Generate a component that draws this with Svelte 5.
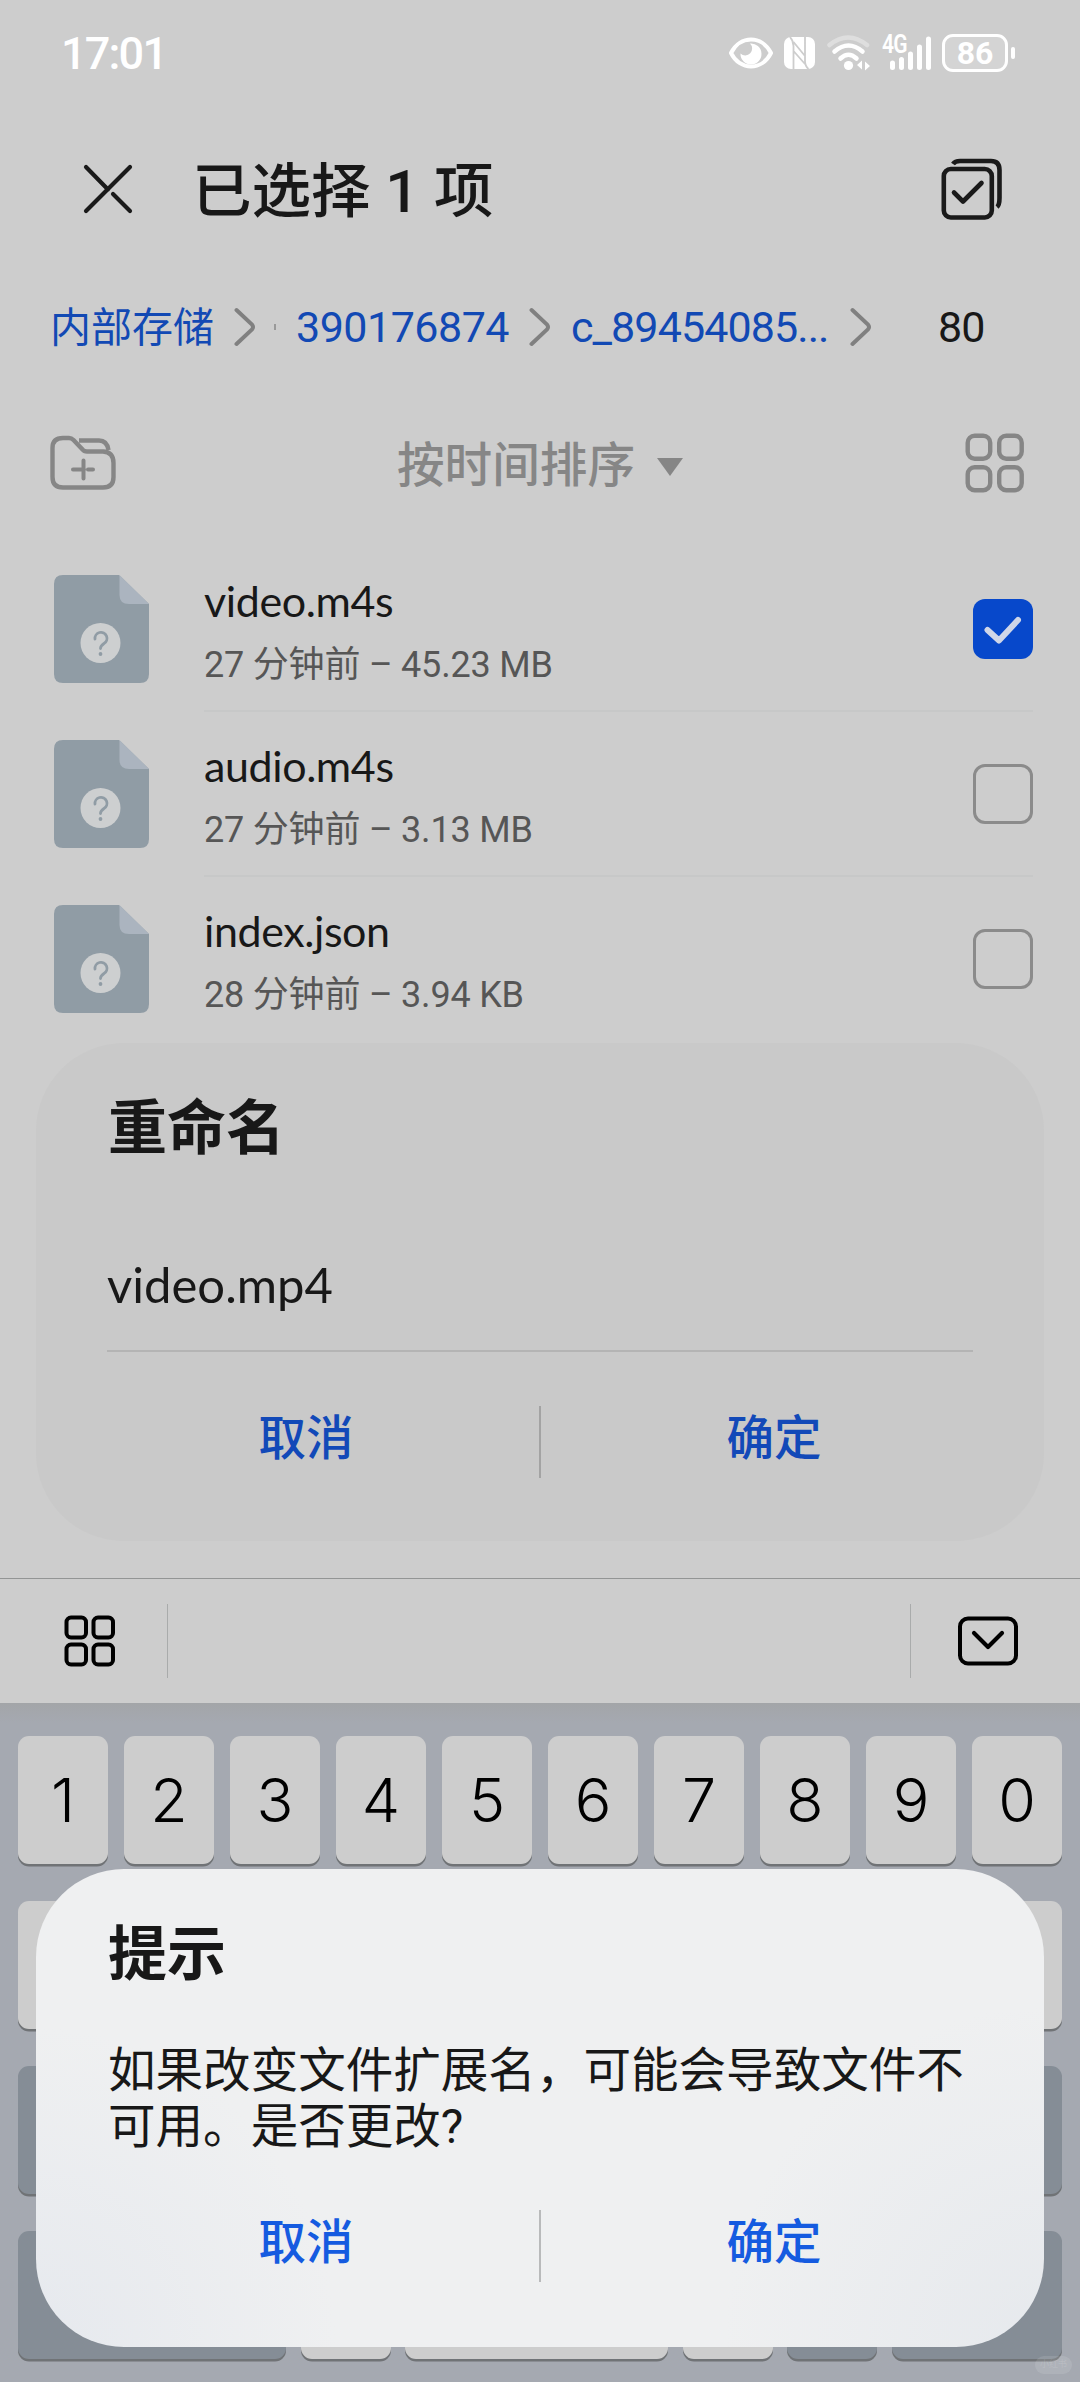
<script lang="ts">
  type FileItem = { name: string; meta: string; checked: boolean }

  let files: FileItem[] = $state([
    { name: 'video.m4s', meta: '27 分钟前 – 45.23 MB', checked: true },
    { name: 'audio.m4s', meta: '27 分钟前 – 3.13 MB', checked: false },
    { name: 'index.json', meta: '28 分钟前 – 3.94 KB', checked: false },
  ])

  const digits = ['1', '2', '3', '4', '5', '6', '7', '8', '9', '0']
  const row3 = ['dark', '', '', '', '', '', '', '', '', 'dark']
  const row4 = ['dark', '', '', '', 'dark', 'dark']
</script>

{#snippet chevron()}
  <svg class="chevron" width="22" height="40" viewBox="0 0 22 40">
    <path d="M2.5 3 L18 17.5 Q20 20 18 22.5 L2.5 37" fill="none" stroke="#808080" stroke-width="4" stroke-linecap="round" />
  </svg>
{/snippet}

{#snippet actions()}
  <div class="actions">
    <button>取消</button>
    <i class="split"></i>
    <button>确定</button>
  </div>
{/snippet}

<div class="phone">
  <main class="manager">
    <div class="status">
      <span class="time">17:01</span>
      <div class="indicators">
        <svg width="46" height="34" viewBox="0 0 46 34">
          <path d="M3 17 C12 -1 34 -1 43 17 C34 35 12 35 3 17 Z" fill="none" stroke="#fff" stroke-width="4" stroke-linejoin="round" />
          <path d="M22 7.5 A10.5 10.5 0 1 1 12.5 17.5 A6 6 0 0 0 22 7.5 Z" fill="#fff" />
        </svg>
        <svg class="nfc" width="31" height="34" viewBox="0 0 31 34">
          <rect x="0" y="1" width="31" height="32" rx="7" fill="#fff" />
          <path d="M6 1 Q9.5 5 9.5 10 V33 M9.5 6 L21 20 M9.5 15 L21 28 M21 1 V25 Q21 30 24.5 33" fill="none" stroke="#cdcdcd" stroke-width="1.8" />
        </svg>
        <svg class="wifi" width="44" height="36" viewBox="0 0 44 36">
          <g fill="none" stroke="#fff" stroke-width="4.5" stroke-linecap="round">
            <path d="M2.5 10 Q21 -5 40 10" stroke="#dedede" />
            <path d="M7.5 16.5 Q21.5 4.5 35.5 16.5" />
            <path d="M13.5 23.5 Q21.5 16 29.5 23.5" />
          </g>
          <circle cx="21.5" cy="30.5" r="4.6" fill="#fff" />
          <path d="M30 30 l5 -4.5 v9 Z M43 31 l-5 -4.5 v9 Z" fill="#fff" />
        </svg>
        <div class="signal">
          <small>4G</small>
          <svg width="50" height="36" viewBox="0 0 50 36">
            <path d="M10.5 28 V32.5 M19.5 24.5 V32.5 M28.5 19 V32.5 M37.5 12 V32.5 M46.5 4 V32.5" stroke="#fff" stroke-width="5" stroke-linecap="round" />
          </svg>
        </div>
        <div class="battery"><span>86</span></div>
        <i class="nub"></i>
      </div>
    </div>

    <header>
      <svg class="close" width="52" height="52" viewBox="0 0 52 52">
        <path d="M4 4 L26 26.5 M31 31 L48 48 M48 4 L4 48" fill="none" stroke="#1a1a1a" stroke-width="4.2" stroke-linecap="round" />
      </svg>
      <h1>已选择 1 项</h1>
      <svg width="62" height="62" viewBox="0 0 62 62">
        <g fill="none" stroke="#1a1a1a" stroke-width="4.6">
          <rect x="2.8" y="11" width="48" height="48.5" rx="7" />
          <path d="M12 6 Q14 3 19 3 H50 Q58.5 3 58.5 12 V40 Q58.5 47 56 49" />
          <path d="M13 34.5 L22 43.5 L40.5 25" stroke-linecap="round" stroke-linejoin="round" />
        </g>
      </svg>
    </header>

    <nav>
      <span class="root">内部存储</span>
      {@render chevron()}
      <i class="dot"></i>
      <span class="id">390176874</span>
      {@render chevron()}
      <span class="folder">c_89454085...</span>
      {@render chevron()}
      <span class="current">80</span>
    </nav>

    <div class="sortbar">
      <svg width="66" height="56" viewBox="0 0 66 56">
        <g fill="none" stroke="#868686" stroke-width="4.4">
          <path d="M2.5 13 Q2.5 3 13 3 H19 Q21.5 3 23.5 5 L32.5 14.5 Q34 16.5 37 16.5 H53 Q63.5 17 63.5 28 V42 Q63.5 52.5 53 52.5 H13 Q2.5 52.5 2.5 42 Z" />
          <path d="M29 5.5 H49 Q57 5.5 58.5 15" />
          <path d="M33.5 25.5 V43.5 M23 34.5 H34 M38 34.5 H43" stroke-width="4" stroke-linecap="round" />
        </g>
      </svg>
      <div class="sort">
        <span>按时间排序</span>
        <svg width="26" height="18" viewBox="0 0 26 18"><path d="M0 0 H26 L13 18 Z" fill="#868686" /></svg>
      </div>
      <svg width="60" height="60" viewBox="0 0 60 60">
        <g fill="none" stroke="#868686" stroke-width="4.4">
          <rect x="2.7" y="2.7" width="22.5" height="23" rx="7" />
          <rect x="34.2" y="2.7" width="22.5" height="23" rx="7" />
          <rect x="2.7" y="34.2" width="22.5" height="23" rx="7" />
          <rect x="34.2" y="34.2" width="22.5" height="23" rx="7" />
        </g>
      </svg>
    </div>

    <ul>
      {#each files as file}
        <li>
          <svg class="doc" width="95" height="108" viewBox="0 0 95 108">
            <path d="M9 0 H65 L95 29 V99 Q95 108 86 108 H9 Q0 108 0 99 V9 Q0 0 9 0 Z" fill="#909ca5" />
            <path d="M65.5 0 L95 29 H75 Q65.5 29 65.5 20 Z" fill="#abb4bf" />
            <circle cx="46.5" cy="68" r="20" fill="#cdcfd0" />
            <path d="M41 64 A6 6 0 1 1 50 68.5 Q46.5 71 46.5 73.5" fill="none" stroke="#909ca5" stroke-width="2.8" stroke-linecap="round" />
            <circle cx="46.5" cy="79" r="1.9" fill="#909ca5" />
          </svg>
          <div class="info">
            <div class="name">{file.name}</div>
            <div class="meta">{file.meta}</div>
          </div>
          <button class="check" class:on={file.checked} aria-label={file.name} onclick={() => (file.checked = !file.checked)}>
            {#if file.checked}
              <svg width="60" height="60" viewBox="0 0 60 60">
                <path d="M14.5 31 L26 41.5 L45 21" fill="none" stroke="#cfd6e8" stroke-width="6" stroke-linecap="round" stroke-linejoin="round" />
              </svg>
            {/if}
          </button>
        </li>
      {/each}
    </ul>
  </main>

  <section class="keyboard">
    <div class="strip">
      <svg width="52" height="52" viewBox="0 0 52 52">
        <g fill="none" stroke="#000" stroke-width="4">
          <rect x="2.5" y="2.5" width="19.5" height="20" rx="4.5" />
          <rect x="29.5" y="2.5" width="19.5" height="20" rx="4.5" />
          <rect x="2.5" y="29.5" width="19.5" height="20" rx="4.5" />
          <rect x="29.5" y="29.5" width="19.5" height="20" rx="4.5" />
        </g>
      </svg>
      <i></i>
      <i class="right"></i>
      <svg width="60" height="50" viewBox="0 0 60 50">
        <rect x="2" y="2.5" width="56" height="45" rx="8" fill="none" stroke="#000" stroke-width="4" />
        <path d="M16 17 L30 31 L44 17" fill="none" stroke="#000" stroke-width="4.2" stroke-linecap="round" stroke-linejoin="round" />
      </svg>
    </div>
    <div class="keys">
      <div class="row">
        {#each digits as d}<b class="key">{d}</b>{/each}
      </div>
      <div class="row">
        {#each digits as _}<b class="key"></b>{/each}
      </div>
      <div class="row">
        {#each row3 as kind}<b class="key {kind}"></b>{/each}
      </div>
      <div class="row last">
        {#each row4 as kind}<b class="key {kind}"></b>{/each}
      </div>
    </div>
  </section>

  <div class="dialog rename">
    <h2>重命名</h2>
    <div class="field">video.mp4</div>
    {@render actions()}
  </div>

  <div class="dialog confirm">
    <h2>提示</h2>
    <p>如果改变文件扩展名，可能会导致文件不可用。是否更改?</p>
    {@render actions()}
  </div>

  <span class="mark">小红书</span>
</div>

<style>
  :global(body) { margin: 0; background: #cdcdcd; }
  .phone {
    position: relative;
    width: 1080px;
    height: 2382px;
    overflow: hidden;
    background: #cdcdcd;
    color: #181818;
    font-family: Roboto, 'Noto Sans CJK SC', sans-serif;
  }
  .phone * { box-sizing: border-box; }
  svg { display: block; flex: none; }
  button { padding: 0; border: 0; background: none; font: inherit; }
  h1, h2, p, ul { margin: 0; padding: 0; list-style: none; }

  .manager { height: 1578px; }
  .status {
    display: flex;
    justify-content: space-between;
    align-items: center;
    height: 106px;
    padding: 0 65px 0 61px;
    color: #fff;
  }
  .time { font-size: 45px; font-weight: 500; letter-spacing: -1.8px; }
  .indicators { display: flex; align-items: center; }
  .nfc { margin-left: 10px; }
  .wifi { margin-left: 12px; }
  .signal { position: relative; margin-left: 11px; }
  .signal small {
    position: absolute;
    left: 0;
    top: -5px;
    font-size: 25px;
    font-weight: 600;
    line-height: 29px;
    letter-spacing: -1px;
    transform: scaleX(0.84);
    transform-origin: left;
  }
  .battery {
    display: flex;
    align-items: center;
    justify-content: center;
    width: 66px;
    height: 38px;
    margin-left: 10px;
    border: 3px solid #fff;
    border-radius: 11px;
    background: #d4d4d4;
    font-size: 32px;
    font-weight: 700;
    line-height: 32px;
  }
  .nub { width: 4px; height: 12px; margin-left: 3px; border-radius: 3px; background: #fff; }

  header {
    display: flex;
    align-items: center;
    height: 166px;
    padding: 0 77px 0 82px;
  }
  h1 { flex: 1; margin-left: 58px; padding-top: 5px; font-size: 59.5px; font-weight: 500; line-height: 84px; }

  nav {
    display: flex;
    align-items: center;
    height: 110px;
    padding-left: 50px;
    color: #1249b4;
    font-size: 43px;
    line-height: 60px;
    white-space: nowrap;
  }
  .root { width: 184px; padding-top: 2px; font-size: 41px; }
  .dot { width: 2px; height: 6px; margin: 0 20px 0 18px; background: #999; }
  .id { width: 233px; letter-spacing: -0.5px; }
  .folder { width: 279px; margin-left: 20px; letter-spacing: -0.9px; }
  .current { margin-left: 66px; color: #181818; letter-spacing: -1px; }

  .sortbar {
    display: flex;
    align-items: center;
    justify-content: space-between;
    height: 162px;
    padding: 0 55px 0 50px;
    color: #868686;
  }
  .sort {
    display: flex;
    align-items: center;
    gap: 22px;
    margin-right: 1px;
    padding-top: 5px;
    font-size: 47.6px;
    font-weight: 500;
    line-height: 66px;
  }
  .sort svg { margin-top: 3px; }

  li { display: flex; height: 165px; padding-left: 54px; }
  .doc { margin-top: 31px; }
  .info {
    flex: 1;
    height: 168px;
    margin-left: 55px;
    padding-top: 27px;
    border-bottom: 2px solid #c7c8c8;
  }
  li:last-child .info { border-bottom: 0; }
  .name { font-family: Lato, sans-serif; font-size: 43px; line-height: 60px; letter-spacing: -0.4px; }
  .meta { margin-top: 8px; color: #565656; font-size: 36px; line-height: 52px; letter-spacing: -0.2px; }
  .check {
    width: 60px;
    height: 60px;
    margin: 55px 47px 0 -60px;
    border: 3px solid #8b8b8b;
    border-radius: 12px;
  }
  .check.on { border: 0; background: #0748cb; }

  .keyboard { height: 804px; background: #a5a9b1; }
  .strip {
    display: flex;
    align-items: center;
    height: 125px;
    padding: 0 62px 0 64px;
    border-top: 1px solid #939595;
    background: #cdcdcd;
  }
  .strip i { width: 1px; height: 74px; margin-left: 51px; background: #a9abab; }
  .strip .right { margin-left: auto; margin-right: 47px; }
  .keys {
    display: grid;
    gap: 37px;
    padding: 33px 18px 0;
    background: linear-gradient(#a3a5a8, #a5a9b1 20px);
  }
  .row { display: grid; grid-template-columns: repeat(10, 90px); gap: 16px; }
  .row.last { grid-template-columns: 268px 90px 263px 90px 90px 170px; gap: 0; justify-content: space-between; }
  .key {
    display: flex;
    align-items: center;
    justify-content: center;
    height: 128px;
    border-radius: 11px;
    background: #cdcdcd;
    box-shadow: 0 2.5px 0 #707376;
    color: #000;
    font: 350 61px/1 Inter, sans-serif;
  }
  .dark { background: #858d96; }

  .dialog {
    position: absolute;
    left: 36px;
    width: 1008px;
    padding: 0 72px;
    border-radius: 88px;
  }
  .rename { top: 1043px; height: 498px; background: #c9c9c9; }
  .confirm {
    top: 1869px;
    height: 478px;
    background:
      radial-gradient(ellipse 300px 320px at 0 100%, #e6e9ee, #e6e9ee00),
      radial-gradient(ellipse 320px 340px at 100% 100%, #e6e9ed, #e6e9ed00),
      #eff0f1;
  }
  h2 { height: 125px; padding-top: 44px; font-size: 59px; font-weight: 600; line-height: 84px; }
  .field {
    width: 866px;
    height: 143px;
    margin: 41px -1px 0;
    padding-top: 43px;
    border-bottom: 2px solid #b4b4b4;
    font-family: Lato, sans-serif;
    font-size: 49px;
    line-height: 64px;
  }
  p { margin-top: 49px; font-size: 47.56px; line-height: 56px; }
  .actions { display: flex; align-items: center; justify-content: space-between; height: 72px; }
  .rename .actions { margin-top: 54px; }
  .confirm .actions { margin-top: 55px; }
  .actions button { width: 396px; padding-bottom: 6px; color: #155be0; font-size: 47.5px; font-weight: 500; line-height: 66px; }
  .rename button { color: #1249b8; }
  .split { width: 2px; height: 72px; background: #b9babb; }
  .rename .split { background: #a3a3a3; }

  .mark {
    position: absolute;
    right: 8px;
    bottom: 8px;
    width: 37px;
    height: 18px;
    border-radius: 9px;
    background: #ffffff1c;
    color: #ffffff24;
    font-size: 9px;
    line-height: 17px;
    text-align: center;
  }
</style>
